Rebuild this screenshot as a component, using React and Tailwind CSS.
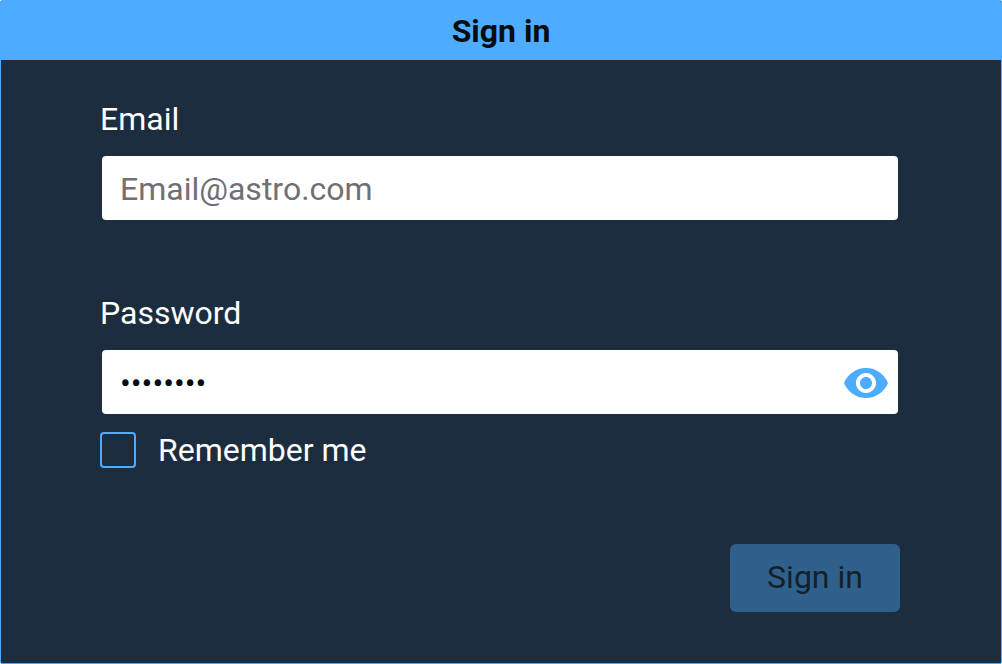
import { useState } from "react";
import { MdVisibility, MdVisibilityOff } from "react-icons/md";

const inputClass =
  "block h-16 w-full rounded-sm bg-white pt-0.5 pl-4.5 pr-16 text-[32px] leading-10 text-[#080c11] placeholder:text-[#6f7076] outline-none focus-visible:ring-2 focus-visible:ring-[#4dacff]";

export default function App() {
  const [email, setEmail] = useState("");
  const [password, setPassword] = useState("password");
  const [visible, setVisible] = useState(false);

  return (
    <main className="flex min-h-screen flex-col overflow-hidden rounded-xs border border-[#4dacff] bg-[#1b2d3e] font-['Roboto',sans-serif] text-[32px] leading-10 text-white">
      <header className="bg-[#4dacff] pt-2.5 pb-2.25 text-center text-[#080c11]">
        <h1 className="font-bold">Sign in</h1>
      </header>
      <form className="pt-9.75 pr-25.25 pl-24.75" onSubmit={(e) => e.preventDefault()}>
        <div>
          <label htmlFor="email" className="block">
            Email
          </label>
          <div className="mt-4.25 px-0.5">
            <input
              id="email"
              type="email"
              className={inputClass}
              placeholder="Email@astro.com"
              value={email}
              onChange={(e) => setEmail(e.target.value)}
            />
          </div>
        </div>
        <div className="mt-18.25">
          <label htmlFor="password" className="block">
            Password
          </label>
          <div className="relative mt-4.25 px-0.5">
            <input
              id="password"
              type={visible ? "text" : "password"}
              className={inputClass}
              value={password}
              onChange={(e) => setPassword(e.target.value)}
            />
            <button
              type="button"
              aria-label={visible ? "Hide password" : "Show password"}
              className="absolute inset-y-0 right-2.5 flex items-center pt-0.5 text-[#4dacff]"
              onClick={() => setVisible(!visible)}
            >
              {visible ? <MdVisibilityOff className="size-12" /> : <MdVisibility className="size-12" />}
            </button>
          </div>
        </div>
        <label className="mt-4 flex w-fit items-center gap-5.5">
          <input
            type="checkbox"
            className="size-9 appearance-none rounded-sm border-2 border-[#4dacff] checked:bg-[#4dacff]"
          />
          Remember me
        </label>
        <div className="mt-18.5 flex justify-end">
          <button
            type="submit"
            disabled
            className="h-17 min-w-42.5 rounded-md bg-[#2f608c] px-8 pb-0.5 text-[#13202c]"
          >
            Sign in
          </button>
        </div>
      </form>
    </main>
  );
}
